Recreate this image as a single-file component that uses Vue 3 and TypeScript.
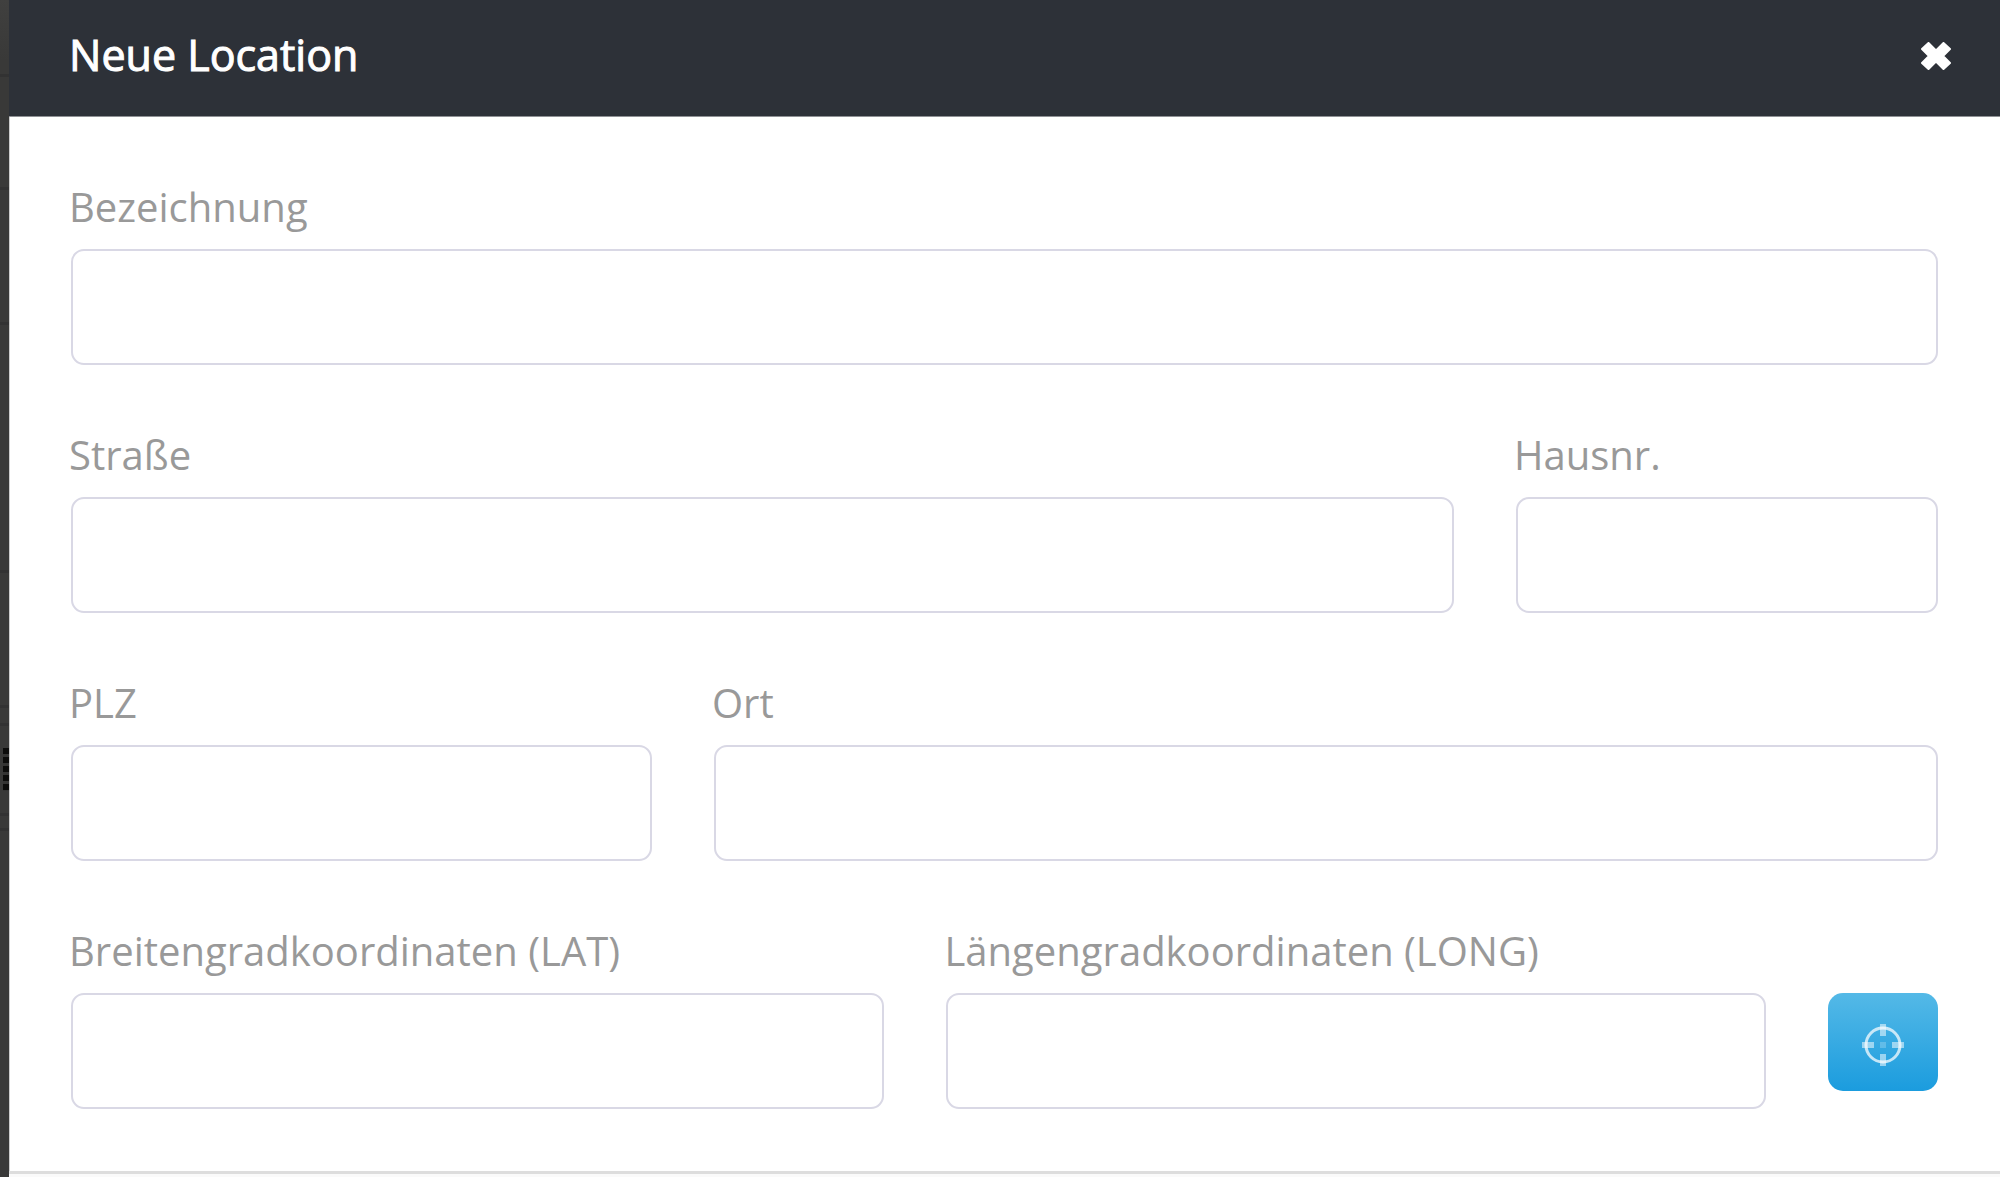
<script setup lang="ts">
import { reactive } from 'vue'

interface Field {
  id: string
  label: string
}

interface Row {
  name: string
  fields: Field[]
  locate?: boolean
}

const rows: Row[] = [
  { name: 'full', fields: [{ id: 'bezeichnung', label: 'Bezeichnung' }] },
  {
    name: 'street',
    fields: [
      { id: 'strasse', label: 'Straße' },
      { id: 'hausnr', label: 'Hausnr.' },
    ],
  },
  {
    name: 'city',
    fields: [
      { id: 'plz', label: 'PLZ' },
      { id: 'ort', label: 'Ort' },
    ],
  },
  {
    name: 'coords',
    fields: [
      { id: 'lat', label: 'Breitengradkoordinaten (LAT)' },
      { id: 'long', label: 'Längengradkoordinaten (LONG)' },
    ],
    locate: true,
  },
]

const values = reactive<Record<string, string>>({})
</script>

<template>
  <div class="page">
    <div class="backdrop" aria-hidden="true">
      <span class="line l1"></span>
      <span class="line l2"></span>
      <span class="line l3"></span>
      <span class="line l4"></span>
      <span class="line l5"></span>
      <span class="line l6"></span>
      <span class="grip"></span>
      <span class="line l7"></span>
      <span class="line l8"></span>
    </div>
    <section class="dialog" role="dialog" aria-labelledby="dialog-title">
      <header class="head">
        <h1 id="dialog-title">Neue Location</h1>
        <button type="button" class="close" aria-label="Schließen">
          <svg viewBox="0 0 30 28" width="30" height="28">
            <path
              d="M7.500 1 15 8.500 22.500 1 29 7 22 14 29 21 22.500 27 15 19.500 7.500 27 1 21 8 14 1 7Z"
              fill="#fff"
              stroke="#fff"
              stroke-width="2"
              stroke-linejoin="round"
            />
          </svg>
        </button>
      </header>
      <form class="body" @submit.prevent>
        <div v-for="row in rows" :key="row.name" class="row" :class="row.name">
          <div v-for="field in row.fields" :key="field.id" class="field">
            <label :for="field.id">{{ field.label }}</label>
            <input :id="field.id" v-model="values[field.id]" type="text" />
          </div>
          <button v-if="row.locate" type="button" class="locate" aria-label="Koordinaten ermitteln">
            <svg viewBox="0 0 44 44" width="44" height="44" fill="none" stroke="#fff">
              <circle cx="22" cy="22" r="17" stroke-width="3" stroke-opacity=".72" />
              <path d="M22 1v12M22 31v12M1 22h12M31 22h12" stroke-width="6" stroke-opacity=".52" />
              <path d="M19 22h6" stroke-width="6" stroke-opacity=".22" />
            </svg>
          </button>
        </div>
      </form>
      <footer class="foot"></footer>
    </section>
  </div>
</template>

<style>
body {
  margin: 0;
  background: #fff;
}
</style>

<style scoped>
.page {
  display: flex;
  min-height: 100vh;
  font-family: 'Open Sans', 'Noto Sans', sans-serif;
}

.backdrop {
  position: relative;
  flex: 0 0 9px;
  overflow: hidden;
  background: linear-gradient(#40403f, #393938 60px);
}

.line {
  position: absolute;
  left: 0;
  right: 0;
  height: 3px;
  background: #323232;
}

.l1 { top: 74px; }
.l2 { top: 187px; }
.l3 { top: 322px; }
.l4 { top: 570px; }
.l5 { top: 705px; }
.l6 { top: 723px; }
.l7 { top: 813px; }
.l8 { top: 828px; }

.grip {
  position: absolute;
  top: 748px;
  left: 3px;
  right: 0;
  height: 43px;
  background: repeating-linear-gradient(#0c0c0b 0 6px, #343433 6px 9px);
}

.dialog {
  flex: 1;
  min-width: 0;
  display: flex;
  flex-direction: column;
  background: #fff;
}

.head {
  display: flex;
  align-items: center;
  justify-content: space-between;
  box-sizing: border-box;
  height: 117px;
  padding: 0 49px 4px 60px;
  background: #2d3138;
  border-bottom: 1px solid #8f9195;
}

h1 {
  margin: 0;
  font-size: 43px;
  line-height: 58px;
  padding-bottom: 2px;
  font-weight: 400;
  color: #fff;
  -webkit-text-stroke: 1px #fff;
}

.close {
  display: flex;
  padding: 0;
  border: 0;
  background: none;
  cursor: pointer;
}

.body {
  flex: 1;
  display: flex;
  flex-direction: column;
  gap: 52px;
  box-sizing: border-box;
  padding: 52px 62px 61px 61px;
  border-left: 1px solid #ccc;
}

.row {
  display: grid;
  column-gap: 62px;
}

.street { grid-template-columns: minmax(0, 1383fr) minmax(0, 422fr); }
.city { grid-template-columns: minmax(0, 581fr) minmax(0, 1224fr); }
.coords { grid-template-columns: minmax(0, 813fr) minmax(0, 819fr) 110px; }

.field {
  display: flex;
  flex-direction: column;
  min-width: 0;
}

label {
  height: 80px;
  margin-left: -2px;
  font-size: 40px;
  line-height: 76px;
  color: #999;
  white-space: nowrap;
}

input {
  box-sizing: border-box;
  width: 100%;
  height: 116px;
  padding: 0 24px;
  border: 2px solid #d9d8e5;
  border-radius: 13px;
  outline: 0;
  background: #fff;
  font: inherit;
  font-size: 40px;
  color: #555;
}

.locate {
  display: flex;
  align-items: center;
  justify-content: center;
  height: 98px;
  margin-top: 80px;
  padding: 6px 0 0;
  border: 0;
  border-radius: 15px;
  background: linear-gradient(#54b9e7, #1b9cde);
  cursor: pointer;
}

.foot {
  height: 3px;
  border-top: 3px solid #ddd;
  background: #fafafa;
}
</style>
